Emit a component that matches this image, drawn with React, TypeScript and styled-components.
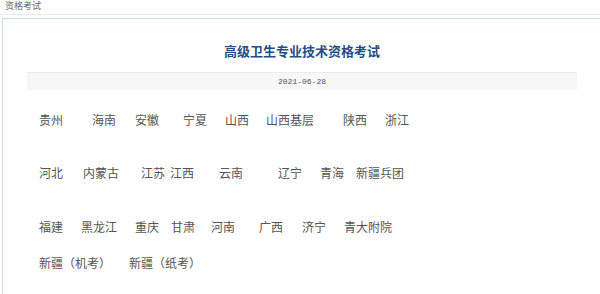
import React from "react";
import styled, { createGlobalStyle } from "styled-components";

const Global = createGlobalStyle`
  html, body { margin: 0; padding: 0; background: #fff; overflow: hidden; }
  body { font-family: "Noto Sans CJK SC", "Liberation Sans", sans-serif; }
`;

const TabBar = styled.div`
  height: 14px;
  border-bottom: 1px solid #ececec;
  padding-left: 5px;
  font-size: 9px;
  line-height: 12px;
  color: #666;
`;

const Panel = styled.div`
  margin: 3px -20px 0 2px;
  border: 1px solid #c9ddf0;
  border-bottom: none;
  height: 276px;
  box-sizing: border-box;
`;

const Content = styled.div`
  width: 550px;
  margin-left: 24px;
  padding-top: 22px;
`;

const Title = styled.h1`
  margin: 0;
  text-align: center;
  font-size: 13px;
  line-height: 19px;
  font-weight: bold;
  color: #1f4f86;
`;

const DateBar = styled.div`
  margin-top: 12px;
  height: 18px;
  background: #f7f7f7;
  border-top: 1px solid #ececec;
  box-sizing: border-box;
  text-align: center;
  font-family: "Liberation Mono", monospace;
  font-size: 8px;
  line-height: 17px;
  color: #555;
`;

const Row = styled.div<{ $top: number }>`
  display: flex;
  padding-left: 12px;
  margin-top: ${(p) => p.$top}px;
  height: 20px;
  align-items: center;
`;

const Link = styled.a<{ $gap: number }>`
  margin-left: ${(p) => p.$gap}px;
  font-size: 12px;
  line-height: 20px;
  color: #555;
  text-decoration: none;
  white-space: nowrap;
`;

type Item = [string, number];

const rows: { top: number; items: Item[] }[] = [
  {
    top: 20,
    items: [
      ["贵州", 39], ["海南", 92], ["安徽", 135], ["宁夏", 183],
      ["山西", 225], ["山西基层", 266], ["陕西", 343], ["浙江", 385],
    ],
  },
  {
    top: 33,
    items: [
      ["河北", 39], ["内蒙古", 83], ["江苏", 141], ["江西", 170],
      ["云南", 219], ["辽宁", 278], ["青海", 320], ["新疆兵团", 356],
    ],
  },
  {
    top: 34,
    items: [
      ["福建", 39], ["黑龙江", 81], ["重庆", 135], ["甘肃", 171],
      ["河南", 211], ["广西", 259], ["济宁", 302], ["青大附院", 344],
    ],
  },
  {
    top: 16,
    items: [["新疆（机考）", 39], ["新疆（纸考）", 129]],
  },
];

export default function App() {
  return (
    <>
      <Global />
      <TabBar>资格考试</TabBar>
      <Panel>
        <Content>
          <Title>高级卫生专业技术资格考试</Title>
          <DateBar>2021-06-28</DateBar>
          {rows.map((row, i) => {
            let prevEnd = 39;
            return (
              <Row key={i} $top={row.top}>
                {row.items.map(([name, x], j) => {
                  const gap = j === 0 ? 0 : x - prevEnd;
                  prevEnd = x + name.length * 12;
                  return (
                    <Link key={name} href="#" $gap={gap}>
                      {name}
                    </Link>
                  );
                })}
              </Row>
            );
          })}
        </Content>
      </Panel>
    </>
  );
}
